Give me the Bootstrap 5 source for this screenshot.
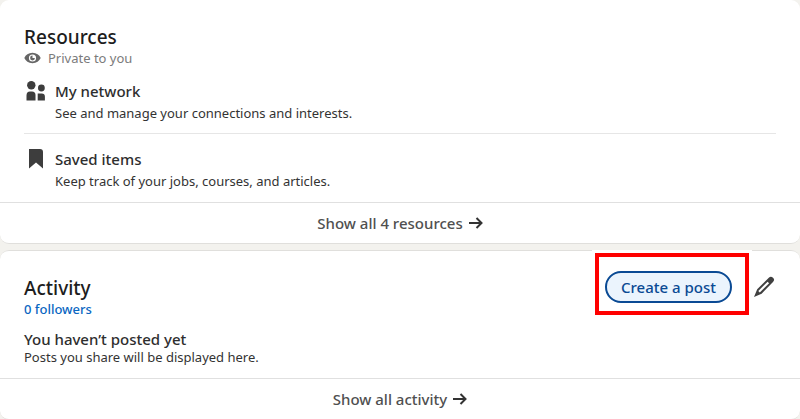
<!DOCTYPE html>
<html lang="en">
<head>
<meta charset="utf-8">
<meta name="viewport" content="width=device-width, initial-scale=1">
<title>Profile</title>
<link href="https://cdn.jsdelivr.net/npm/bootstrap@5.3.0/dist/css/bootstrap.min.css" rel="stylesheet">
<style>
body{background:#f3f2ee;font-family:"Segoe UI","Noto Sans","Open Sans",sans-serif;color:#333;font-size:13px;line-height:20px}
main{gap:6px}
.panel{border:0;border-bottom:1px solid #e0dfdc;border-radius:9px}
.panel + .panel{border-top:1px solid #e0dfdc}
.panel-main{padding:26px 24px 11px}
.panel h2{font-size:19px;line-height:22px;padding-bottom:2px;font-weight:500;color:#1d1d1d}
.panel h3{font-size:15px;line-height:20px;font-weight:500;color:#2e2e2e}
.note{line-height:16px;color:#7b7b7b;gap:7px}
.resources{margin-top:15px}
.resource{gap:7px}
.resource + .resource{border-top:1px solid #e6e6e6;margin-top:10px;padding-top:15px}
.resource svg{width:24px}
.resource p{margin-top:2px}
.show-all{border-top:1px solid #e0e0e0;font-size:15px;line-height:20px;padding:10px;gap:6px;color:#505050;font-weight:500}
.followers{line-height:16px;color:#0a66c2;font-weight:500}
.empty{margin-top:12px}
.empty p{line-height:16px}
.activity-main{padding-bottom:13px}
.tools{gap:19px;margin-top:-6px}
.create{border:2px solid #0a4a94;border-radius:16px;background:#ebf4fd;color:#0a4a94;font-size:15px;line-height:20px;font-weight:500;padding:4px 14px}
.highlight{position:absolute;inset:-18px -17px -12px -10px;border:4px solid #f00;outline:3px solid #fff;pointer-events:none}
</style>
</head>
<body>
<main class="d-flex flex-column">
<section class="card panel">
<div class="panel-main">
<h2 class="m-0">Resources</h2>
<div class="note d-flex align-items-center">
<svg width="17" height="12" viewBox="0 0 17 12" aria-hidden="true"><path fill="#666" fill-rule="evenodd" d="M8.500 .8C4.500 .8 1.700 3 .3 6c1.400 3 4.200 5.200 8.200 5.200S15.300 9 16.700 6C15.300 3 12.500 .8 8.500 .8zm0 1.600a3.600 3.600 0 1 1 0 7.200 3.600 3.600 0 0 1 0-7.200zm0 1.200a2.400 2.400 0 1 0 2.400 2.400H8.500z"/></svg>
<span>Private to you</span>
</div>
<div class="resources">
<div class="resource d-flex">
<svg height="22" viewBox="0 0 24 22" fill="#3d3d3d" aria-hidden="true"><circle cx="7.300" cy="4.200" r="4.200"/><circle cx="17.400" cy="7" r="3.400"/><path d="M2.500 19.500V14.500Q2.500 10.500 6 10.500h2Q11.500 10.500 11.500 14v5.500zM13.700 19.500v-7h4q3.200 0 3.200 3v4z"/></svg>
<div><h3 class="m-0">My network</h3><p class="mb-0">See and manage your connections and interests.</p></div>
</div>
<div class="resource d-flex">
<svg height="22" viewBox="0 0 24 22" fill="#3d3d3d" aria-hidden="true"><path d="M5 0h11q3 0 3 3v16.500l-7-6-7 6z"/></svg>
<div><h3 class="m-0">Saved items</h3><p class="mb-0">Keep track of your jobs, courses, and articles.</p></div>
</div>
</div>
</div>
<a href="#" class="show-all d-flex justify-content-center align-items-center text-decoration-none">Show all 4 resources
<svg width="14" height="12" viewBox="0 0 14 12" fill="none" stroke="#333" stroke-width="2" aria-hidden="true"><path d="M0 6h12M7.500 1l5 5-5 5"/></svg></a>
</section>
<section class="card panel">
<div class="panel-main activity-main">
<div class="d-flex justify-content-between align-items-start">
<div><h2 class="m-0">Activity</h2><a href="#" class="followers d-block text-decoration-none">0 followers</a></div>
<div class="tools d-flex align-items-center">
<div class="position-relative"><button type="button" class="create d-block">Create a post</button><span class="highlight"></span></div>
<button type="button" class="btn p-0 border-0 d-flex" aria-label="Edit activity"><svg width="25" height="24" viewBox="0 0 25 24" aria-hidden="true"><path fill="#404040" fill-rule="evenodd" d="M22 2.700a3 3 0 0 0-4.200 0L6.200 14.300 3 22l7.600-3.300L22 7a3 3 0 0 0 0-4.300zM8.800 17.500l-1.500-1.500L16.600 6.700l1.500 1.500z"/></svg></button>
</div>
</div>
<div class="empty"><h3 class="m-0">You haven’t posted yet</h3><p class="mb-0">Posts you share will be displayed here.</p></div>
</div>
<a href="#" class="show-all d-flex justify-content-center align-items-center text-decoration-none">Show all activity
<svg width="14" height="12" viewBox="0 0 14 12" fill="none" stroke="#333" stroke-width="2" aria-hidden="true"><path d="M0 6h12M7.500 1l5 5-5 5"/></svg></a>
</section>
</main>
<script src="https://cdn.jsdelivr.net/npm/bootstrap@5.3.0/dist/js/bootstrap.bundle.min.js"></script>
</body>
</html>
